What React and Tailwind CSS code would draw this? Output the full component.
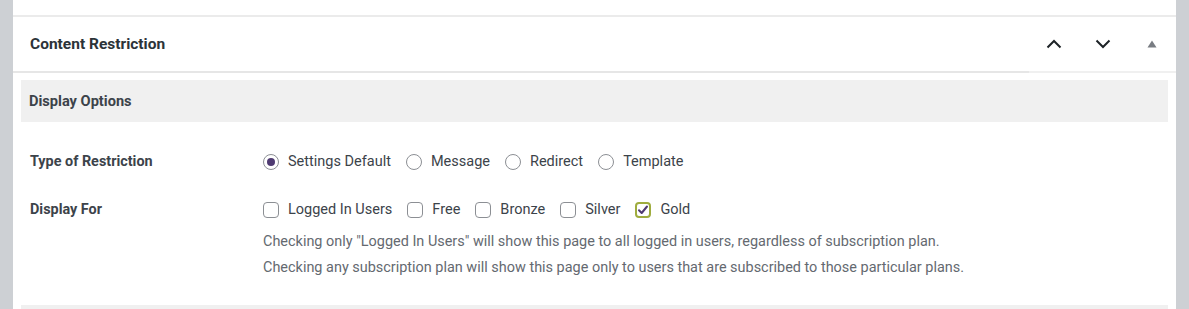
import React from "react";

function Radio({ checked, label }) {
  return (
    <label className="flex items-center gap-[9px]">
      <span className="flex h-4 w-4 shrink-0 items-center justify-center rounded-full border border-[#8c8f94] bg-white">
        {checked && <span className="h-2 w-2 rounded-full bg-[#4f3a72]" />}
      </span>
      <span>{label}</span>
    </label>
  );
}

function Check({ checked, label }) {
  return (
    <label className="flex items-center gap-[9px]">
      {checked ? (
        <span className="flex h-4 w-4 shrink-0 items-center justify-center rounded-[4px] border-2 border-[#9fac3e] bg-white">
          <svg width="12" height="12" viewBox="0 0 12 12" fill="none">
            <path d="M2 6.2 L4.7 9 L10 2.5" stroke="#4f3a72" strokeWidth="2" strokeLinecap="round" strokeLinejoin="round" />
          </svg>
        </span>
      ) : (
        <span className="h-4 w-4 shrink-0 rounded-[4px] border border-[#8c8f94] bg-white" />
      )}
      <span>{label}</span>
    </label>
  );
}

export default function App() {
  return (
    <div
      className="flex h-[309px] w-[1189px] items-start overflow-hidden bg-[#cdd0d4]"
      style={{ fontFamily: "Roboto, 'Liberation Sans', sans-serif" }}
    >
      <div className="ml-[13px] flex min-h-[340px] w-[1163px] flex-col bg-white">
        <div className="box-content h-[15px] shrink-0 border-b-2 border-[#ebebeb]" />
        <div className="flex h-[56px] shrink-0 items-stretch">
          <div className="flex flex-1 items-center border-b-2 border-[#e6e6e6] pl-[17px] pt-[2px] text-[15.5px] font-bold text-[#2c3338]">
            Content Restriction
          </div>
          <div className="flex border-b-2 border-[#f0f0f0]">
            <button className="flex w-[49px] items-center justify-center">
              <svg width="16" height="10" viewBox="0 0 16 10" fill="none">
                <path d="M1.5 8.5 L8 2 L14.5 8.5" stroke="#1d2327" strokeWidth="2" />
              </svg>
            </button>
            <button className="flex w-[49px] items-center justify-center">
              <svg width="16" height="10" viewBox="0 0 16 10" fill="none">
                <path d="M1.5 1.5 L8 8 L14.5 1.5" stroke="#1d2327" strokeWidth="2" />
              </svg>
            </button>
            <button className="flex w-[49px] items-center justify-center pb-[1px]">
              <svg width="10" height="8" viewBox="0 0 10 8">
                <path d="M5 0.5 L9.5 7.5 L0.5 7.5 Z" fill="#787c82" />
              </svg>
            </button>
          </div>
        </div>
        <div className="flex shrink-0 flex-col px-2 pt-[7px]">
          <div className="flex h-[42px] shrink-0 items-center bg-[#f0f0f0] pl-2 pt-[2px] text-[14.6px] font-bold text-[#3c434a]">
            Display Options
          </div>
          <div className="mt-[28px] flex h-6 shrink-0 items-center text-[14.5px] text-[#3c434a]">
            <div className="w-[242px] pl-[9px] text-[14.4px] font-bold">Type of Restriction</div>
            <div className="flex items-center gap-[15px]">
              <Radio checked label="Settings Default" />
              <Radio label="Message" />
              <Radio label="Redirect" />
              <Radio label="Template" />
            </div>
          </div>
          <div className="mt-[24px] flex h-6 shrink-0 items-center text-[14.5px] text-[#3c434a]">
            <div className="w-[242px] pl-[9px] text-[14.4px] font-bold">Display For</div>
            <div className="flex items-center gap-[15px]">
              <Check label="Logged In Users" />
              <Check label="Free" />
              <Check label="Bronze" />
              <Check label="Silver" />
              <Check checked label="Gold" />
            </div>
          </div>
          <div className="mt-[7px] shrink-0 pl-[242px] text-[14.45px] leading-[26px] text-[#646970]">
            <p>Checking only "Logged In Users" will show this page to all logged in users, regardless of subscription plan.</p>
            <p>Checking any subscription plan will show this page only to users that are subscribed to those particular plans.</p>
          </div>
          <div className="mt-[24px] h-[20px] shrink-0 bg-[#f0f0f0]" />
        </div>
      </div>
    </div>
  );
}
